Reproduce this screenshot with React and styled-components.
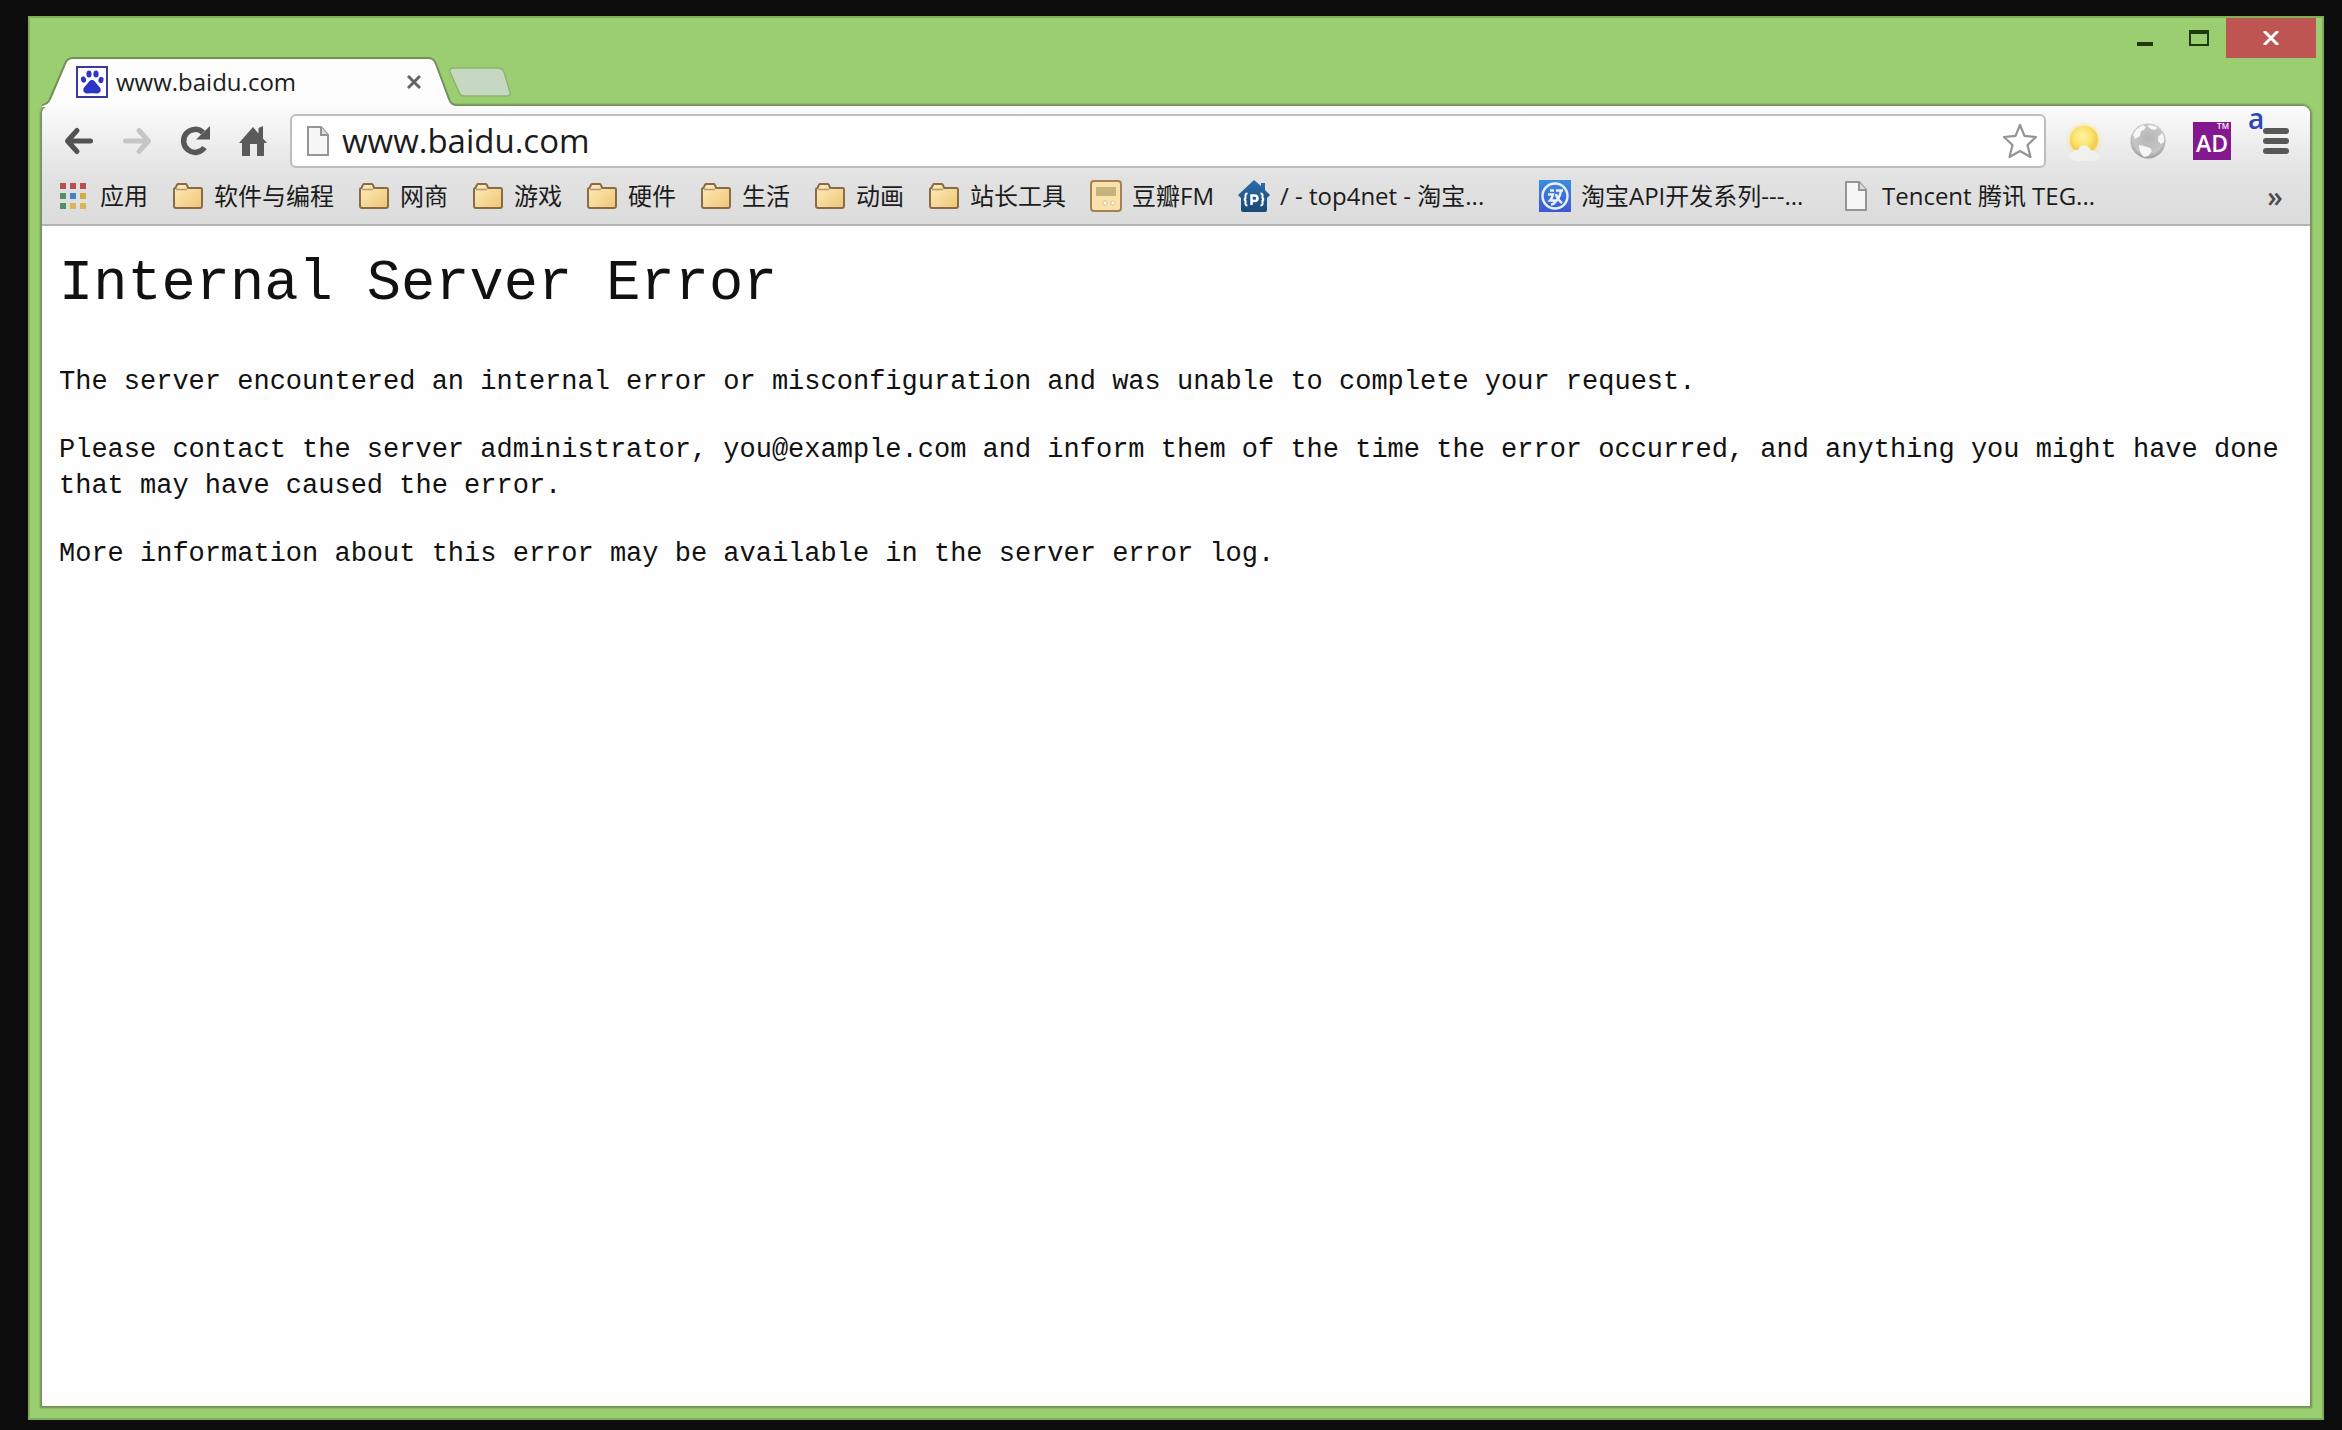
import React from "react";
import styled, { createGlobalStyle } from "styled-components";

const GlobalStyle = createGlobalStyle`
  * { box-sizing: border-box; }
  body {
    margin: 0;
    background: #0d0d0d;
    color: #1c1c1c;
    font-family: "Open Sans", "Noto Sans CJK SC", sans-serif;
  }
  button {
    border: 0;
    padding: 0;
    background: none;
    color: inherit;
    font: inherit;
  }
  svg { display: block; flex: none; }
`;

const Desktop = styled.div`
  display: flex;
  min-height: 100vh;
  padding: 16px 18px 10px 28px;
`;

const BrowserWindow = styled.div`
  flex: 1;
  min-width: 0;
  display: flex;
  flex-direction: column;
  background: #9bce70;
  box-shadow: inset 0 0 0 2px #7fae56;
`;

const TitleBar = styled.header`
  display: flex;
  align-items: flex-end;
  height: 90px;
  padding: 2px 8px 0 14px;
`;

const Tab = styled.div`
  position: relative;
  z-index: 1;
  display: flex;
  align-items: center;
  width: 414px;
  height: 50px;
  margin-bottom: -1px;
  padding: 0 28px 0 34px;
`;

const TabShape = styled.svg`
  position: absolute;
  inset: 0;
`;

const TabTitle = styled.span`
  position: relative;
  flex: 1;
  margin-left: 8px;
  font-size: 24px;
  line-height: 32px;
`;

const TabIcon = styled.span`
  position: relative;
`;

const TabClose = styled.button`
  position: relative;
  display: grid;
  place-items: center;
  width: 28px;
  height: 28px;
`;

const NewTab = styled.button`
  margin: 0 auto 9px -8px;
`;

const Controls = styled.div`
  display: flex;
  align-self: flex-start;
`;

const Control = styled.button`
  display: grid;
  place-items: center;
  width: ${(p) => (p.$danger ? 90 : 54)}px;
  height: 40px;
  background: ${(p) => (p.$danger ? "#bf5553" : "transparent")};
`;

const Panel = styled.div`
  flex: 1;
  display: flex;
  flex-direction: column;
  margin: 0 14px 14px;
  border-radius: 8px 8px 0 0;
  background: #fefefe;
  box-shadow: 0 0 2px 2px #728f58;
`;

const Chrome = styled.div`
  border-bottom: 2px solid #b4b4b4;
  border-radius: 8px 8px 0 0;
  background: linear-gradient(#fbfbfb, #e2e2e2 60%, #dcdcdc);
`;

const Toolbar = styled.div`
  display: flex;
  padding: 8px 2px 0 8px;
`;

const ToolButton = styled.button`
  position: relative;
  display: grid;
  place-items: center;
  width: ${(p) => (p.$wide ? 64 : 58)}px;
  height: 54px;
`;

const Badge = styled.span`
  position: absolute;
  top: -12px;
  left: 4px;
  color: #2b46b9;
  font-size: 28px;
  font-weight: 600;
  line-height: 32px;
`;

const Omnibox = styled.form`
  flex: 1;
  display: flex;
  align-items: center;
  height: 54px;
  margin: 0 6px 0 8px;
  padding: 0 6px 0 10px;
  border: 2px solid #bdbdbd;
  border-radius: 6px;
  background: #fff;
`;

const Address = styled.input`
  flex: 1;
  min-width: 0;
  padding: 0;
  margin-left: 8px;
  border: 0;
  outline: 0;
  background: none;
  color: #1c1c1c;
  font: 33px/44px "Open Sans", sans-serif;
`;

const Bookmarks = styled.nav`
  display: flex;
  align-items: center;
  gap: 24px;
  height: 56px;
  padding: 0 16px;
`;

const Bookmark = styled.a`
  display: flex;
  align-items: center;
  gap: 10px;
  color: #1c1c1c;
  font-size: 24px;
  line-height: 32px;
  text-decoration: none;
  white-space: nowrap;
`;

const BookmarkLabel = styled.span`
  width: ${(p) => (p.$full ? "235px" : "auto")};
`;

const More = styled.button`
  width: 38px;
  margin-left: auto;
  color: #4d4d4d;
  font-size: 28px;
  font-weight: 600;
  line-height: 32px;
`;

const Page = styled.main`
  padding: 26px 17px;
  color: #111;
  font-family: "Liberation Mono", monospace;
`;

const Heading = styled.h1`
  margin: 0 0 48px;
  font-size: 57px;
  font-weight: 400;
  line-height: 64px;
`;

const Paragraph = styled.p`
  margin: 0 0 32px;
  font-size: 27px;
  line-height: 36px;
`;

const PawIcon = () => (
  <svg width="32" height="32" viewBox="0 0 32 32">
    <rect x="1" y="1" width="30" height="30" fill="#fff" stroke="#3a3a9c" strokeWidth="2" />
    <g fill="#2c35c8">
      <ellipse cx="13" cy="8" rx="2.600" ry="3.600" />
      <ellipse cx="20" cy="8" rx="2.600" ry="3.600" />
      <ellipse cx="7.500" cy="13.500" rx="2.500" ry="3.200" transform="rotate(-15 7.500 13.500)" />
      <ellipse cx="25" cy="14" rx="2.500" ry="3.200" transform="rotate(15 25 14)" />
      <path d="M16 14c2.600 0 3.500 2.600 5.300 4.600s3.700 3.400 3.400 5.700c-.4 2.700-2.700 3.600-4.900 3.200-2.300-.4-5.300-.4-7.600 0s-4.500-.5-4.900-3.200c-.3-2.300 1.600-3.700 3.400-5.700s2.700-4.600 5.300-4.600z" />
    </g>
  </svg>
);

const FileIcon = ({ height = 32 }) => (
  <svg width="32" height={height} viewBox="0 0 32 32">
    <path d="M6 2h13l7 8v20H6z" fill="#f7f7f7" stroke="#959595" strokeWidth="2" />
    <path d="M19 2v8h7" fill="#ddd" stroke="#959595" strokeWidth="2" />
  </svg>
);

const FolderIcon = () => (
  <svg width="32" height="32" viewBox="0 0 32 32">
    <defs>
      <linearGradient id="folder" x1="0" y1="0" x2="1" y2="1">
        <stop offset="0" stopColor="#fdeebf" />
        <stop offset="1" stopColor="#f0c573" />
      </linearGradient>
    </defs>
    <path
      d="M2 26V9.500q0-1.500 1.500-1.500L5 4.800q.4-.8 1.400-.8h7q1 0 1.400.8L16.200 8H28.500q1.500 0 1.500 1.500V26q0 2-2 2H4q-2 0-2-2z"
      fill="url(#folder)" stroke="#8a6b48" strokeWidth="2"
    />
    <path d="M4 9.500h11" stroke="#b7976a" strokeWidth="1.500" />
  </svg>
);

const AppsIcon = () => {
  const colors = ["#b9504e", "#b9504e", "#b9504e", "#4f9160", "#4580c4", "#cfae45", "#4f9160", "#dcb458", "#dcb458"];
  return (
    <svg width="32" height="32" viewBox="0 0 32 32">
      {colors.map((c, i) => (
        <rect key={i} x={2 + (i % 3) * 10} y={3 + Math.floor(i / 3) * 10} width="6" height="6" fill={c} />
      ))}
    </svg>
  );
};

const RadioIcon = () => (
  <svg width="32" height="32" viewBox="0 0 32 32">
    <rect x="1" y="1" width="30" height="30" rx="3" fill="#fbe2ac" stroke="#a38254" strokeWidth="2" />
    <rect x="6" y="7" width="20" height="9" fill="#c6b27c" />
    <circle cx="15" cy="23" r="2.200" fill="#fff" stroke="#d9bd82" />
    <circle cx="23" cy="23" r="2.200" fill="#fff" stroke="#d9bd82" />
  </svg>
);

const HouseIcon = () => (
  <svg width="32" height="32" viewBox="0 0 32 32">
    <defs>
      <linearGradient id="house" x1="0" y1="0" x2="0" y2="1">
        <stop offset="0" stopColor="#2c6cab" />
        <stop offset="1" stopColor="#184a72" />
      </linearGradient>
    </defs>
    <path d="M16 0l7 6V3h4v7l5 5-3 3v12q0 2-2 2H5q-2 0-2-2V18l-3-3z" fill="url(#house)" />
    <g fill="none" stroke="#fff" strokeWidth="2">
      <path d="M9.500 13.500q-2.500 0-2 3 .4 2.500-1.500 3 2 .5 1.500 3-.5 3 2 3M22.500 13.500q2.500 0 2 3-.4 2.500 1.500 3-2 .5-1.500 3 .5 3-2 3" />
      <path d="M13.500 25V15.500h3q3 0 3 2.800t-3 2.800h-3" strokeWidth="2.500" />
    </g>
  </svg>
);

const TaobaoIcon = () => (
  <svg width="32" height="32" viewBox="0 0 32 32">
    <defs>
      <linearGradient id="taobao" x1="0" y1="0" x2="0" y2="1">
        <stop offset="0" stopColor="#3b8de0" />
        <stop offset="1" stopColor="#3f57cf" />
      </linearGradient>
    </defs>
    <path d="M0 0h32v32H0z" fill="url(#taobao)" />
    <g fill="none" stroke="#e8f3ff" strokeWidth="2.400">
      <circle cx="16" cy="16" r="12.500" />
      <path d="M11 10.500h4M17 10.500h7M22 10.500q-1 8-7 12.500M17 14q1 5 6 9M9 14.500h5q-1 4-3 6h5q0 4-4 4" />
    </g>
  </svg>
);

const BackIcon = () => (
  <svg width="32" height="32" viewBox="0 0 32 32" fill="none" stroke="#525252" strokeWidth="5" strokeLinecap="round" strokeLinejoin="round">
    <path d="M14 5.500L4.500 16 14 26.500M5 16h22.500" />
  </svg>
);

const ForwardIcon = () => (
  <svg width="32" height="32" viewBox="0 0 32 32" fill="none" stroke="#c6c6c6" strokeWidth="5" strokeLinecap="round" strokeLinejoin="round">
    <path d="M18 5.500L27.500 16 18 26.500M27 16H4.500" />
  </svg>
);

const ReloadIcon = () => (
  <svg width="32" height="32" viewBox="0 0 32 32">
    <path d="M25.500 22.500A11.500 11.500 0 1 1 24 7.500" fill="none" stroke="#585858" strokeWidth="5.500" />
    <path d="M31 1v13.500H17z" fill="#585858" />
  </svg>
);

const HomeIcon = () => (
  <svg width="32" height="32" viewBox="0 0 32 32">
    <path d="M16 2l5.500 6.500V3L26 1v12.500L30 18h-3v13h-7V19h-7v12H5V18H2z" fill="#5a5a5a" />
  </svg>
);

const StarIcon = () => (
  <svg width="36" height="36" viewBox="0 0 36 36">
    <path d="M18 2l4.500 10.800L34 14l-8.500 8 3 12L18 28 7.500 34l3-12L2 14l11.500-1.200z" fill="#fff" stroke="#949494" strokeWidth="2.200" strokeLinejoin="round" />
  </svg>
);

const SunIcon = () => (
  <svg width="40" height="40" viewBox="0 0 40 40">
    <defs>
      <radialGradient id="glow">
        <stop offset=".6" stopColor="#f8dc62" stopOpacity=".7" />
        <stop offset="1" stopColor="#f8e48c" stopOpacity="0" />
      </radialGradient>
      <radialGradient id="sun" cx=".45" cy=".38">
        <stop offset="0" stopColor="#fdf4a4" />
        <stop offset=".6" stopColor="#fbe672" />
        <stop offset="1" stopColor="#f3cf50" />
      </radialGradient>
    </defs>
    <circle cx="20" cy="19" r="19" fill="url(#glow)" />
    <circle cx="20" cy="19" r="14" fill="url(#sun)" />
    <path d="M4 36q0-5 5-5 2-3.500 5-2 3-6.500 9-4 3 1 3.500 4 5 0 4.500 3.500 5 0 5 5-4 3-16 3T4 36z" fill="#f0f0ee" />
  </svg>
);

const GlobeIcon = () => (
  <svg width="36" height="36" viewBox="0 0 36 36">
    <defs>
      <radialGradient id="globe" cx=".5" cy=".42" r=".58">
        <stop offset="0" stopColor="#b6b6b6" />
        <stop offset=".75" stopColor="#c6c6c6" />
        <stop offset="1" stopColor="#9a9a9a" />
      </radialGradient>
    </defs>
    <circle cx="18" cy="18" r="17.500" fill="url(#globe)" />
    <g fill="#f6f6f6">
      <path d="M3 12q3-7 10-10l3 2-2 3-3 1-1 5-5 3z" />
      <path d="M9 22l5 1 6 2 2 3-4 5-4 1q-5-4-5-12z" />
      <path d="M28 14l4-4q3 4 2 9l-3 2-3-3z" />
      <path d="M17 3l4-1q4 1 7 3l-4 2-3-1z" />
    </g>
  </svg>
);

const AdTile = styled.span`
  display: flex;
  flex-direction: column;
  align-items: center;
  width: 38px;
  height: 38px;
  background: #83188f;
  color: #fff;
  font-size: 23px;
  font-weight: 600;
  line-height: 28px;
`;

const AdMark = styled.span`
  align-self: flex-end;
  padding-right: 2px;
  font-size: 8px;
  line-height: 7px;
`;

const MenuIcon = () => (
  <svg width="26" height="26" viewBox="0 0 26 26" fill="#585858">
    <rect width="26" height="6" rx="3" />
    <rect y="10" width="26" height="6" rx="3" />
    <rect y="20" width="26" height="6" rx="3" />
  </svg>
);

const bookmarks = [
  { icon: AppsIcon, label: "应用" },
  { icon: FolderIcon, label: "软件与编程" },
  { icon: FolderIcon, label: "网商" },
  { icon: FolderIcon, label: "游戏" },
  { icon: FolderIcon, label: "硬件" },
  { icon: FolderIcon, label: "生活" },
  { icon: FolderIcon, label: "动画" },
  { icon: FolderIcon, label: "站长工具" },
  { icon: RadioIcon, label: "豆瓣FM" },
  { icon: HouseIcon, label: "/ - top4net - 淘宝...", full: true },
  { icon: TaobaoIcon, label: "淘宝API开发系列---...", full: true },
  { icon: FileIcon, label: "Tencent 腾讯 TEG...", full: true },
];

export default function App() {
  return (
    <>
      <GlobalStyle />
      <Desktop>
        <BrowserWindow>
          <TitleBar>
            <Tab>
              <TabShape width="414" height="50" viewBox="0 0 414 50">
                <path
                  d="M0 48q6-1 8-6L23 7q2-6 8-6H386q6 0 8 6l13 35q2 6 7 6v2H0z"
                  fill="#fdfdfd"
                />
                <path
                  d="M0 48q6-1 8-6L23 7q2-6 8-6H386q6 0 8 6l13 35q2 6 7 6"
                  fill="none" stroke="#728f58" strokeWidth="2"
                />
              </TabShape>
              <TabIcon><PawIcon /></TabIcon>
              <TabTitle>www.baidu.com</TabTitle>
              <TabClose aria-label="Close tab">
                <svg width="14" height="14" viewBox="0 0 14 14" stroke="#666" strokeWidth="3">
                  <path d="M1 1l12 12M13 1L1 13" />
                </svg>
              </TabClose>
            </Tab>
            <NewTab aria-label="New tab">
              <svg width="64" height="30" viewBox="0 0 64 30">
                <path d="M5 1h45q4 0 6 4l6 20q1 4-3 4H16q-4 0-5-4L2 5q-1-4 3-4z" fill="#c6d8c2" stroke="#8cb56b" strokeWidth="1.500" />
              </svg>
            </NewTab>
            <Controls>
              <Control aria-label="Minimize">
                <svg width="16" height="20" viewBox="0 0 16 20"><path d="M0 14h16v4H0z" fill="#1f3a10" /></svg>
              </Control>
              <Control aria-label="Maximize">
                <svg width="20" height="16" viewBox="0 0 20 16">
                  <path d="M1 1h18v14H1z" fill="none" stroke="#1f3a10" strokeWidth="2" />
                  <path d="M0 0h20v4H0z" fill="#1f3a10" />
                </svg>
              </Control>
              <Control $danger aria-label="Close">
                <svg width="16" height="14" viewBox="0 0 16 14" stroke="#fff" strokeWidth="3">
                  <path d="M1 0l14 14M15 0L1 14" />
                </svg>
              </Control>
            </Controls>
          </TitleBar>

          <Panel>
            <Chrome>
              <Toolbar>
                <ToolButton aria-label="Back"><BackIcon /></ToolButton>
                <ToolButton aria-label="Forward"><ForwardIcon /></ToolButton>
                <ToolButton aria-label="Reload"><ReloadIcon /></ToolButton>
                <ToolButton aria-label="Home"><HomeIcon /></ToolButton>
                <Omnibox>
                  <FileIcon height={34} />
                  <Address aria-label="Address" defaultValue="www.baidu.com" />
                  <button type="button" aria-label="Bookmark this page"><StarIcon /></button>
                </Omnibox>
                <ToolButton $wide aria-label="Weather"><SunIcon /></ToolButton>
                <ToolButton $wide aria-label="Globe"><GlobeIcon /></ToolButton>
                <ToolButton $wide>
                  <AdTile><AdMark>TM</AdMark>AD</AdTile>
                </ToolButton>
                <ToolButton $wide aria-label="Menu">
                  <MenuIcon />
                  <Badge>a</Badge>
                </ToolButton>
              </Toolbar>
              <Bookmarks>
                {bookmarks.map(({ icon: Icon, label, full }) => (
                  <Bookmark key={label} href="#">
                    <Icon />
                    <BookmarkLabel $full={full}>{label}</BookmarkLabel>
                  </Bookmark>
                ))}
                <More aria-label="More bookmarks">»</More>
              </Bookmarks>
            </Chrome>

            <Page>
              <Heading>Internal Server Error</Heading>
              <Paragraph>
                The server encountered an internal error or misconfiguration and was unable to complete your request.
              </Paragraph>
              <Paragraph>
                Please contact the server administrator, you@example.com and inform them of the time the error occurred,
                and anything you might have done that may have caused the error.
              </Paragraph>
              <Paragraph>
                More information about this error may be available in the server error log.
              </Paragraph>
            </Page>
          </Panel>
        </BrowserWindow>
      </Desktop>
    </>
  );
}
